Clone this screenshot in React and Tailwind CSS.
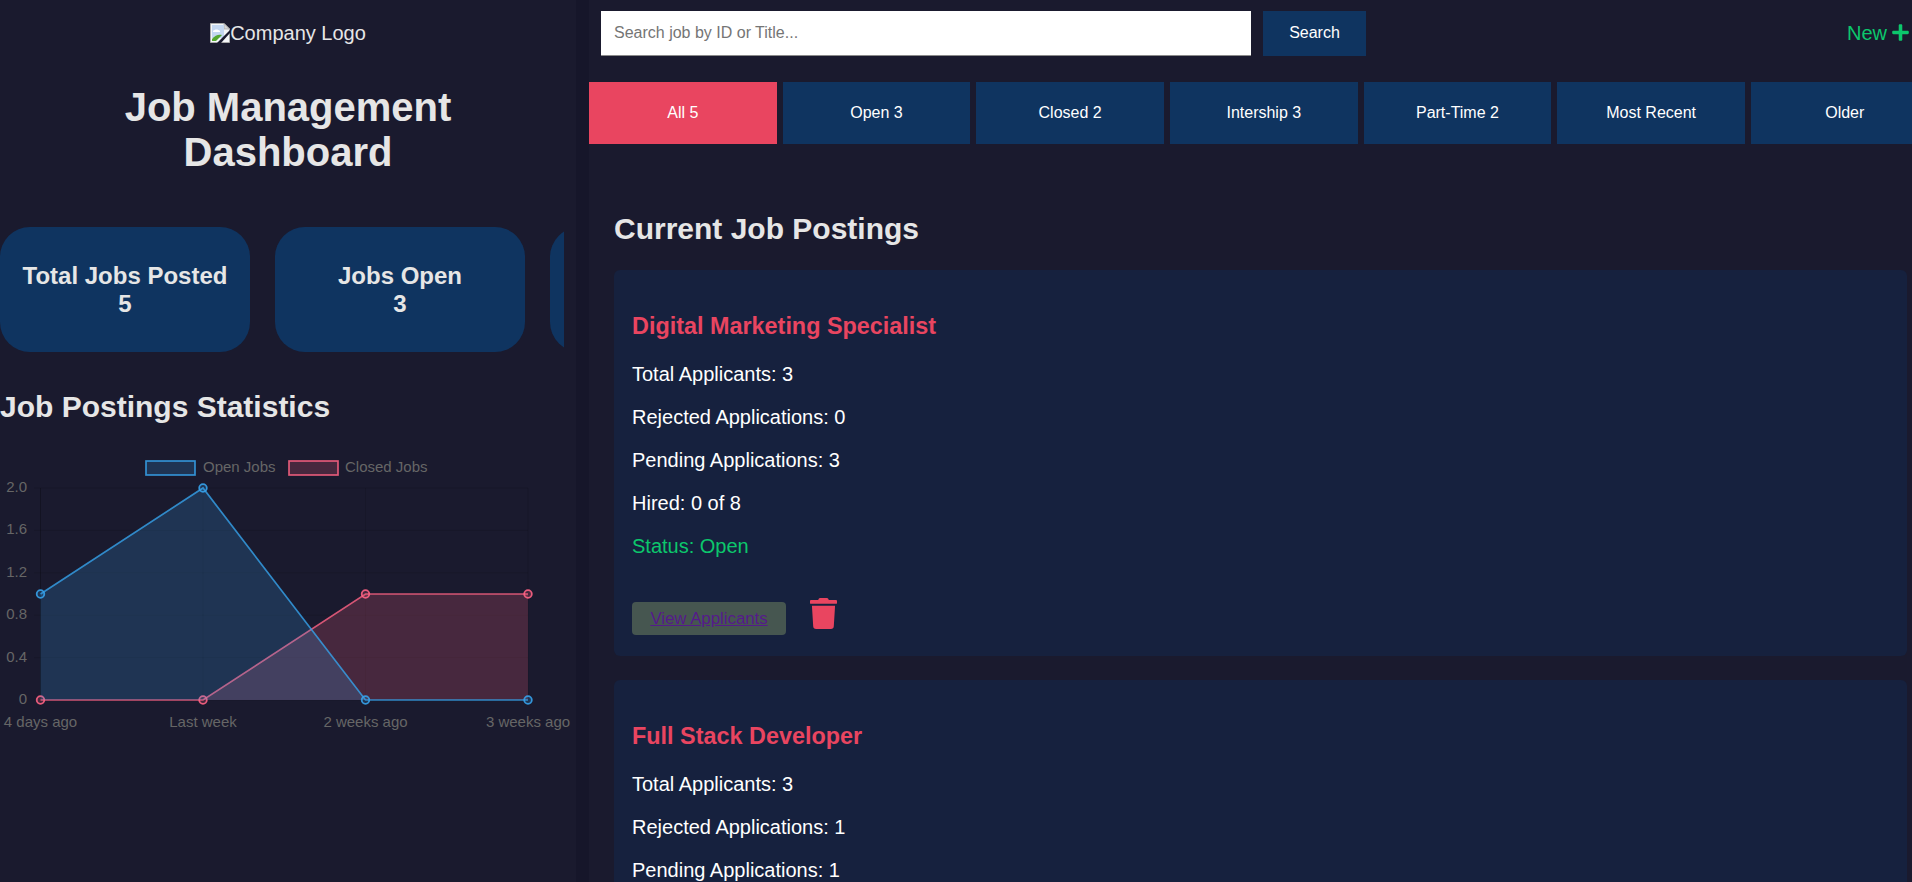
import { FaPlus, FaTrash } from "react-icons/fa";

const tabs = ["All 5", "Open 3", "Closed 2", "Intership 3", "Part-Time 2", "Most Recent", "Older"];

const jobs = [
  { title: "Digital Marketing Specialist", total: 3, rejected: 0, pending: 3, hired: "0 of 8", status: "Open" },
  { title: "Full Stack Developer", total: 3, rejected: 1, pending: 1, hired: "1 of 4", status: "Open" }
];

const xs = [40.5, 203, 365.5, 528];
const yFor = (v) => 700 - v * 106;
const openData = [1, 2, 0, 0];
const closedData = [0, 0, 1, 1];
const BLUE = "rgb(54,162,235)";
const RED = "rgb(255,99,132)";

function Series({ data, color }) {
  const pts = data.map((v, i) => `${xs[i]},${yFor(v) - 450}`).join(" ");
  return (
    <g>
      <polygon points={`${xs[0]},250 ${pts} ${xs[3]},250`} fill={color} fillOpacity="0.2" />
      <polyline points={pts} fill="none" stroke={color} strokeOpacity="0.8" strokeWidth="1.7" />
      {data.map((v, i) => (
        <circle key={i} cx={xs[i]} cy={yFor(v) - 450} r="3.8" fill={color} fillOpacity="0.2" stroke={color} strokeOpacity="0.9" strokeWidth="1.8" />
      ))}
    </g>
  );
}

function JobsChart() {
  const ticks = ["2.0", "1.6", "1.2", "0.8", "0.4", "0"];
  const labels = ["4 days ago", "Last week", "2 weeks ago", "3 weeks ago"];
  return (
    <svg width="576" height="300" viewBox="0 0 576 300" className="block" style={{ fontFamily: "'Liberation Sans', Arial, sans-serif" }}>
      <rect x="146" y="11" width="49" height="14" fill={BLUE} fillOpacity="0.2" stroke={BLUE} strokeOpacity="0.85" strokeWidth="1.7" />
      <text x="203" y="22" fontSize="15" fill="#666">Open Jobs</text>
      <rect x="289" y="11" width="49" height="14" fill={RED} fillOpacity="0.2" stroke={RED} strokeOpacity="0.85" strokeWidth="1.7" />
      <text x="345" y="22" fontSize="15" fill="#666">Closed Jobs</text>

      {ticks.map((t, i) => (
        <g key={t}>
          <line x1="34" x2="528" y1={38 + i * 42.4} y2={38 + i * 42.4} stroke="#000" strokeOpacity="0.1" />
          <text x="27" y={42 + i * 42.4} fontSize="15" fill="#666" textAnchor="end">{t}</text>
        </g>
      ))}
      {xs.map((x, i) => (
        <g key={x}>
          <line x1={x} x2={x} y1="38" y2="256" stroke="#000" strokeOpacity={i === 0 ? 0.25 : 0.1} />
          <text x={x} y="277" fontSize="15" fill="#666" textAnchor="middle">{labels[i]}</text>
        </g>
      ))}

      {/* red goes first, the blue fill sits over its line */}
      <Series data={closedData} color={RED} />
      <Series data={openData} color={BLUE} />
    </svg>
  );
}

function BrokenImageIcon() {
  return (
    <svg width="20" height="20" viewBox="0 0 20 20" className="shrink-0">
      <path d="M0.5 0.5H14L19.5 6V19.5H0.5Z" fill="#f4f6f8" stroke="#a9a9a9" />
      <path d="M14 0.5V6H19.5Z" fill="#d8d8d8" stroke="#a9a9a9" strokeWidth="0.8" />
      <rect x="2" y="2" width="12" height="13" fill="#c4d7f0" />
      <path d="M3 8c2-2 5-2 7 0v1H3Z" fill="#ffffff" />
      <path d="M2 18v-2c3-4 7-5 10-4l-6 6Z" fill="#55a82f" />
      <path d="M7 20L20 7v3L11 20Z" fill="#1a1a2e" />
    </svg>
  );
}

function Sidebar() {
  return (
    <aside className="w-[576px] shrink-0 text-[#e6e6e6]">
      <div className="mt-[23px] flex items-center justify-center text-[20px] leading-[20px]">
        <BrokenImageIcon />
        <span>Company Logo</span>
      </div>
      <h1 className="mt-[42px] px-[100px] text-center text-[40px] font-bold leading-[45px]">Job Management Dashboard</h1>

      <div className="mt-[52px] flex w-[564px] gap-[25px] overflow-hidden">
        <StatCard label="Total Jobs Posted" value="5" />
        <StatCard label="Jobs Open" value="3" />
        <StatCard label="Jobs Closed" value="2" />
      </div>

      <h2 className="mt-[38px] text-[30px] font-bold leading-[33px]">Job Postings Statistics</h2>
      <div className="mt-[27px]">
        <JobsChart />
      </div>
    </aside>
  );
}

function StatCard({ label, value }) {
  return (
    <div className="h-[125px] w-[250px] shrink-0 rounded-[30px] bg-[#0f3460] pt-[35px] text-center text-[24px] font-bold leading-[28px]">
      <div>{label}</div>
      <div>{value}</div>
    </div>
  );
}

function JobCard({ job }) {
  return (
    <div className="mb-[24.5px] rounded-[6px] bg-[#16213e] pb-[21px] pl-[18px] pt-[42px]">
      <h3 className="text-[23.4px] font-bold leading-[28px] text-[#e94560]">{job.title}</h3>
      <div className="mt-[22.6px] flex flex-col gap-[21px] text-[20px] leading-[22px] text-white">
        <p>Total Applicants: {job.total}</p>
        <p>Rejected Applications: {job.rejected}</p>
        <p>Pending Applications: {job.pending}</p>
        <p>Hired: {job.hired}</p>
        <p className="text-[#0cc76c]">Status: {job.status}</p>
      </div>
      <div className="mt-[45.4px] flex items-center">
        <a href="#" className="flex h-[33px] w-[154px] items-center justify-center rounded-[4px] bg-[#465650] text-[16.8px] text-[#551a8b] underline">
          View Applicants
        </a>
        <FaTrash className="ml-[24px] h-[31px] w-[27px] -translate-y-[5px] text-[#e94560]" />
      </div>
    </div>
  );
}

export default function App() {
  return (
    <div className="flex h-[882px] w-[1912px] overflow-hidden bg-[#1a1a2e] font-['Liberation_Sans',Arial,sans-serif]">
      <Sidebar />
      <div className="w-[13px] shrink-0 bg-[#16162a]" />

      <main className="min-w-0 flex-1">
        <div className="mt-[11px] flex h-[45px] items-center pl-[12px] pr-[2px]">
          <input
            type="text"
            placeholder="Search job by ID or Title..."
            className="h-[45px] w-[650px] border-b border-b-[#8a8a8a] bg-white px-[13px] text-[16px] text-black outline-none placeholder:text-[#757575]"
          />
          <button className="ml-[12px] h-[45px] w-[103px] bg-[#0f3460] pb-[2px] text-[16px] text-white">Search</button>
          <button className="ml-auto flex items-center gap-[4px] pb-[2px] text-[20px] text-[#0cc76c]">
            New <FaPlus className="h-[19px] w-[19px]" />
          </button>
        </div>

        <div className="mt-[26px] flex gap-[6px] overflow-hidden">
          {tabs.map((tab, i) => (
            <button
              key={tab}
              className={i === 0 ? "h-[62px] w-[187.67px] shrink-0 bg-[#e94560] text-[16px] text-white" : "h-[62px] w-[187.67px] shrink-0 bg-[#0f3460] text-[16px] text-white"}
            >
              {tab}
            </button>
          ))}
        </div>

        <section className="pl-[25px] pr-[5px] pt-[68px]">
          <h2 className="text-[30px] font-bold leading-[33px] text-[#e6e6e6]">Current Job Postings</h2>
          <div className="mt-[25px]">
            {jobs.map((job) => (
              <JobCard key={job.title} job={job} />
            ))}
          </div>
        </section>
      </main>
    </div>
  );
}
